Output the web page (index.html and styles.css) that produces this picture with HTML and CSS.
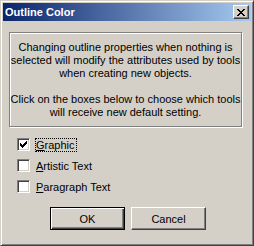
FILE: index.html
```html
<!DOCTYPE html>
<html>
<head lang="en">
    <meta charset="UTF-8">
    <title>Outline Color</title>
    <link rel="stylesheet" href="styles.css">
</head>
<body>
<div id="window">
    <div id="titlebar">
        <span id="title">Outline Color</span>
        <span id="close">
            <svg width="8" height="7" viewBox="0 0 8 7">
                <path d="M0 0h2v1h-2zM6 0h2v1h-2zM1 1h2v1h-2zM5 1h2v1h-2zM2 2h4v1h-4zM3 3h2v1h-2zM2 4h4v1h-4zM1 5h2v1h-2zM5 5h2v1h-2zM0 6h2v1h-2zM6 6h2v1h-2z" fill="#000"/>
            </svg>
        </span>
    </div>
    <div id="group">
        <p>Changing outline properties when nothing is<br>selected will modify the attributes used by tools<br>when creating new objects.</p>
        <p>Click on the boxes below to choose which tools<br>will receive new default setting.</p>
    </div>
    <ul id="options">
        <li>
            <span class="box">
                <svg width="7" height="7" viewBox="0 0 7 7">
                    <path d="M6 0h1v1h-1zM5 1h2v1h-2zM0 2h1v1h-1zM4 2h3v1h-3zM0 3h2v1h-2zM3 3h3v1h-3zM0 4h5v1h-5zM1 5h3v1h-3zM2 6h1v1h-1z" fill="#000"/>
                </svg>
            </span>
            <span class="label focus"><u>G</u>raphic</span>
        </li>
        <li>
            <span class="box"></span>
            <span class="label"><u>A</u>rtistic Text</span>
        </li>
        <li>
            <span class="box"></span>
            <span class="label"><u>P</u>aragraph Text</span>
        </li>
    </ul>
    <div id="buttons">
        <span class="btn default">OK</span>
        <span class="btn">Cancel</span>
    </div>
</div>
</body>
</html>
```

FILE: styles.css
```css
*{
    margin: 0;
    padding: 0;
}
ul{
    list-style: none;
}
body{
    font-family: "Liberation Sans", Arial, sans-serif;
    font-size: 11px;
    color: #000;
    background: #d4d0c8;
}
#window{
    width: 254px;
    height: 246px;
    box-sizing: border-box;
    background: #d4d0c8;
    border: 1px solid;
    border-color: #d4d0c8 #404040 #404040 #d4d0c8;
    box-shadow: inset 1px 1px #fff, inset -1px -1px #808080;
    padding: 2px;
}
#titlebar{
    height: 18px;
    display: flex;
    align-items: center;
    justify-content: space-between;
    padding: 0 2px;
    background: linear-gradient(to right, #0a246a, #a6caf0);
}
#title{
    color: #fff;
    font-weight: bold;
    font-size: 11px;
    line-height: 18px;
}
#close{
    width: 16px;
    height: 14px;
    box-sizing: border-box;
    display: flex;
    align-items: center;
    justify-content: center;
    background: #d4d0c8;
    border: 1px solid;
    border-color: #fff #404040 #404040 #fff;
    box-shadow: inset -1px -1px #808080;
    padding-right: 1px;
}
#group{
    width: 233px;
    height: 95px;
    box-sizing: border-box;
    margin: 11px 0 0 6px;
    border: 1px solid #808080;
    box-shadow: inset 1px 1px #fff, 1px 1px #fff;
    padding-top: 8px;
    text-align: center;
    line-height: 13px;
}
#group p + p{
    margin-top: 13px;
}
#options{
    margin-top: 11px;
    padding-left: 14px;
}
#options li{
    height: 13px;
    display: flex;
    align-items: center;
    margin-bottom: 8px;
}
#options li:last-child{
    margin-bottom: 0;
}
.box{
    width: 13px;
    height: 13px;
    box-sizing: border-box;
    display: flex;
    align-items: center;
    justify-content: center;
    background: #fff;
    border: 1px solid;
    border-color: #808080 #fff #fff #808080;
    box-shadow: inset 1px 1px #404040, inset -1px -1px #d4d0c8;
}
.label{
    margin-left: 5px;
    padding: 0 1px 0 0;
    line-height: 12px;
    border: 1px solid transparent;
}
.label.focus{
    border: 1px dotted #000;
}
#buttons{
    display: flex;
    justify-content: center;
    gap: 6px;
    margin-top: 14px;
    padding-left: 2px;
}
.btn{
    width: 75px;
    height: 23px;
    box-sizing: border-box;
    display: flex;
    align-items: center;
    justify-content: center;
    border: 1px solid;
    border-color: #fff #404040 #404040 #fff;
    box-shadow: inset -1px -1px #808080;
}
.btn.default{
    border: 1px solid #000;
    box-shadow: inset 1px 1px #fff, inset -1px -1px #404040, inset -2px -2px #808080;
}
```
